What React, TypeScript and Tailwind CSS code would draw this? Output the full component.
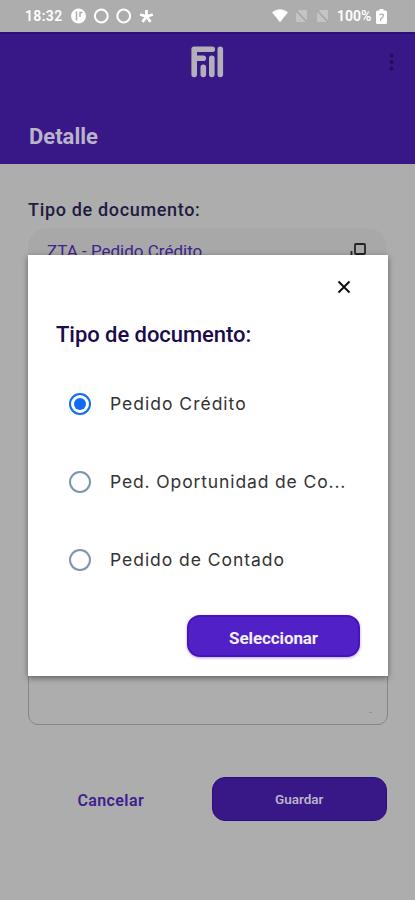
import { useState } from "react";
import clsx from "clsx";

const options = [
  { id: "credito", label: "Pedido Crédito", spacing: "tracking-[1px]" },
  { id: "oportunidad", label: "Ped. Oportunidad de Co...", spacing: "tracking-[0.87px]" },
  { id: "contado", label: "Pedido de Contado", spacing: "tracking-[0.96px]" },
];

function StatusBar() {
  return (
    <div className="flex h-8 items-center justify-between bg-[#adadad] pl-[25px] pr-[28px] text-[14px] font-semibold text-white">
      <div className="flex items-center">
        <span className="w-[37px] whitespace-nowrap tracking-[0.35px]">18:32</span>
        <svg className="ml-[9px]" width="84" height="16" viewBox="0 0 84 16" fill="none">
          <circle cx="7.5" cy="8" r="7.5" fill="#fff" />
          <path d="M5.5 3.5v9M9 9V4.500h2.500" stroke="#adadad" strokeWidth="1.5" />
          <circle cx="30.3" cy="8" r="6.4" stroke="#fff" strokeWidth="2" />
          <circle cx="52.7" cy="8" r="6.4" stroke="#fff" strokeWidth="2" />
          <path
            d="M75.5 8.500V2M75.5 8.500l6.3-2M75.5 8.500l4 5.4M75.5 8.500l-4 5.4M75.5 8.500l-6.3-2"
            stroke="#fff"
            strokeWidth="2.8"
          />
        </svg>
      </div>
      <div className="flex items-center">
        <svg width="57" height="14" viewBox="0 0 57 14">
          <path d="M0 3.2Q8-2.6 16 3.2L8 13.2Z" fill="#fff" />
          <path d="M27 1h8v12H24V4Z" fill="#c4c4c4" />
          <path d="M24 1.500l11 11.500" stroke="#a5a5a5" strokeWidth="1.5" />
          <path d="M48 1h8v12H45V4Z" fill="#c4c4c4" />
          <path d="M45 1.500l11 11.500" stroke="#a5a5a5" strokeWidth="1.5" />
        </svg>
        <span className="ml-2 w-[36px] whitespace-nowrap">100%</span>
        <svg className="ml-[3px]" width="11" height="15" viewBox="0 0 11 15">
          <path d="M3.5 0h4v1.5H9.500Q11 1.500 11 3v10.500Q11 15 9.500 15h-8Q0 15 0 13.500V3Q0 1.500 1.500 1.500h2Z" fill="#fff" />
          <path d="M3.5 6.200Q5.500 4 7.500 6q0 2.500-3 4v2" fill="none" stroke="#adadad" strokeWidth="1.200" />
        </svg>
      </div>
    </div>
  );
}

function Logo() {
  return (
    <svg width="33" height="32" viewBox="0 0 33 32" fill="none" stroke="#b4b0ba" strokeWidth="5.6" strokeLinecap="round">
      <path d="M21.3 3.200H3.200V28.500M3.200 12.200H12.300M12.300 21.300V28.500M20.800 12.300V28.500M29.300 3.200V28.500" strokeLinejoin="round" />
    </svg>
  );
}

function Header() {
  return (
    <header className="h-[132px] border-t-2 border-[#300c80] bg-[#381787]">
      <div className="flex h-[60px] items-start pl-[191px] pr-[21px] pt-3">
        <Logo />
        <svg className="ml-auto mt-[7px]" width="5" height="18" viewBox="0 0 5 18" fill="#23105c">
          <circle cx="2.5" cy="2.500" r="2.100" />
          <circle cx="2.5" cy="9" r="2.100" />
          <circle cx="2.5" cy="15.500" r="2.100" />
        </svg>
      </div>
      <h1 className="pl-[29px] pt-[27px] text-[22px] font-bold leading-[32px] text-[#bab4ca]">Detalle</h1>
    </header>
  );
}

function TypeDialog() {
  const [selected, setSelected] = useState("credito");

  return (
    <div
      role="dialog"
      className="absolute left-7 top-[255px] flex h-[421px] w-[360px] flex-col bg-white shadow-[0_2px_6px_rgba(0,0,0,0.45)]"
    >
      <button type="button" aria-label="Cerrar" className="ml-auto mr-[37px] mt-[25px]">
        <svg width="14" height="14" viewBox="0 0 14 14" stroke="#111" strokeWidth="2">
          <path d="M1.500 1.500l11 11M12.500 1.500l-11 11" />
        </svg>
      </button>
      <h2 className="ml-7 mt-[26px] whitespace-nowrap text-[22px] font-medium leading-[30px] tracking-[-0.05px] text-[#1a0b4b]">
        Tipo de documento:
      </h2>
      <div className="mt-[15px] flex flex-col">
        {options.map(({ id, label, spacing }) => (
          <label key={id} className="flex h-[78px] items-center pl-[41px]">
            <input
              type="radio"
              name="tipo"
              className="sr-only"
              checked={selected === id}
              onChange={() => setSelected(id)}
            />
            <span
              className={clsx(
                "flex size-[22px] items-center justify-center rounded-full border-2",
                selected === id ? "border-[#126cf0]" : "border-[#8094ab]"
              )}
            >
              {selected === id && <span className="size-3 rounded-full bg-[#126cf0]" />}
            </span>
            <span
              className={clsx(
                "ml-[19px] whitespace-nowrap font-['Inter',sans-serif] text-[17.500px] text-[#333]",
                spacing
              )}
            >
              {label}
            </span>
          </label>
        ))}
      </div>
      <button
        type="button"
        className="ml-[159px] mt-4 h-[42px] w-[173px] rounded-[13px] border-2 border-[#4613bc] bg-[#5120c6] pt-[3px] text-[17px] font-bold leading-[34px] tracking-[-0.1px] text-[#f3effd] shadow-[0_1px_3px_rgba(70,19,188,0.4)]"
      >
        Seleccionar
      </button>
    </div>
  );
}

export default function App() {
  return (
    <div className="relative h-[900px] w-[415px] overflow-hidden bg-[#adadad] font-['Roboto',sans-serif]">
      <StatusBar />
      <Header />
      <main className="px-7 pt-[34px]">
        <p className="whitespace-nowrap text-[18px] font-medium leading-6 tracking-[0.67px] text-[#221a3f]">
          Tipo de documento:
        </p>
        <div className="mt-[6px] flex h-[46px] items-center justify-between rounded-[20px] bg-[#a8a8a8] pl-[19px] pr-[20px] text-[17px] text-[#3e248c]">
          <span className="whitespace-nowrap pt-px">ZTA - Pedido Crédito</span>
          <svg width="17" height="17" viewBox="0 0 17 17" fill="none" stroke="#242424" strokeWidth="1.800">
            <rect x="5" y="1" width="10" height="10" rx="1" />
            <path d="M1.500 8v7h10" />
          </svg>
        </div>
        <div className="mt-[351px] h-[100px] w-[360px] rounded-[10px] border border-[#858585] pr-[15px] pt-[86px]">
          <div className="ml-auto h-px w-[3px] bg-[#929292]" />
        </div>
        <div className="mt-[52px] flex">
          <button type="button" className="h-[44px] w-[166px] pt-[3px] text-[16px] font-semibold tracking-[0.400px] text-[#3c2090]">
            Cancelar
          </button>
          <button
            type="button"
            className="ml-[18px] h-[44px] w-[176px] rounded-[13px] border border-[#2e0981] bg-[#381787] text-[13.500px] font-semibold text-[#bab4ca]"
          >
            Guardar
          </button>
        </div>
      </main>
      <TypeDialog />
    </div>
  );
}
